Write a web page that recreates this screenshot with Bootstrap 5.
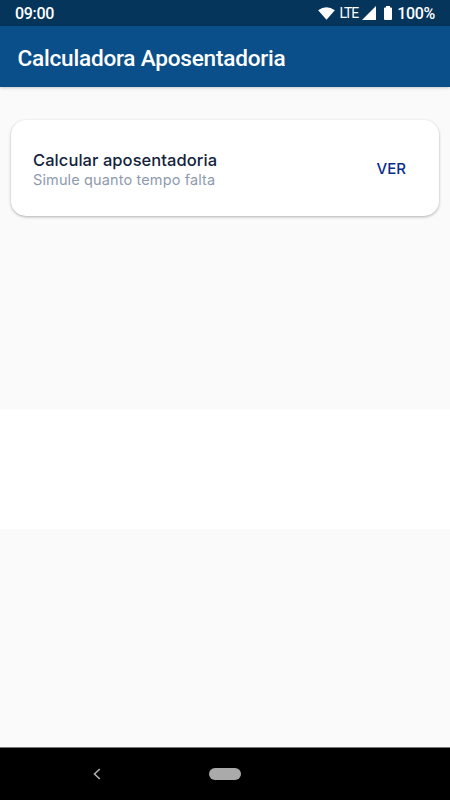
<!DOCTYPE html>
<html lang="pt-BR">
<head>
<meta charset="utf-8">
<meta name="viewport" content="width=device-width, initial-scale=1">
<title>Calculadora Aposentadoria</title>
<link rel="stylesheet" href="https://cdn.jsdelivr.net/npm/bootstrap@5.3.0/dist/css/bootstrap.min.css">
<style>
  body { background: #fafafa; font-family: Roboto, sans-serif; }
  .status-bar { height: 26px; background: #05355b; font-size: 16px; letter-spacing: -.3px; line-height: 26px; font-weight: 500; padding: 2px 15px 0 15px; }
  .status-bar svg { display: block; margin-top: -2px; }
  .lte { font-size: 14px; font-weight: 400; letter-spacing: -1.1px; line-height: 24px; margin: 0 4px 2px 4px; }
  .charge { margin-left: 5px; }
  .app-bar { height: 61px; background: #0a4f8a; box-shadow: 0 1px 3px rgba(0,0,0,.2); padding: 5px 18px 0 17.5px; }
  .app-title { font-size: 22.6px; font-weight: 500; line-height: 1; letter-spacing: -.23px; }
  .option-card { margin: 33px 11px 0; height: 96px; border-radius: 15px; box-shadow: 0 1px 3px rgba(0,0,0,.3); padding: 3px 33px 0 22px; }
  .option-text { font-family: Inter, sans-serif; line-height: 20px; }
  .option-title { font-size: 16.5px; font-weight: 450; letter-spacing: .06px; color: #14233c; }
  .option-sub { font-size: 14.5px; letter-spacing: .13px; color: #8e9bae; }
  .option-action { font-family: Inter, sans-serif; font-size: 15px; font-weight: 500; color: #0b2d86; }
  .blank-band { height: 120px; margin-top: 193px; }
  .nav-keys { height: 53px; background: #000; border-top: 1px solid #777; }
  .home-pill { width: 32px; height: 12px; background: #aaa; }
  .back-key { margin-right: 15px; }
</style>
</head>
<body class="vh-100 d-flex flex-column overflow-hidden">
  <div class="status-bar d-flex align-items-center justify-content-between text-white flex-shrink-0">
    <span class="clock">09:00</span>
    <div class="d-flex align-items-center">
      <svg width="17" height="13" viewBox="0 0 18 14"><path fill="#fff" d="M0 3.400Q9-2.600 18 3.400L9 13.600Z"/></svg>
      <span class="lte">LTE</span>
      <svg width="14" height="14" viewBox="0 0 14 14"><path fill="#fff" d="M14 0v14H0Z"/></svg>
      <svg class="ms-2" width="8" height="14" viewBox="0 0 8 14"><path fill="#fff" d="M2 0h4v1.500H7q1 0 1 1V13q0 1-1 1H1q-1 0-1-1V2.500q0-1 1-1h1Z"/></svg>
      <span class="charge">100%</span>
    </div>
  </div>
  <header class="app-bar d-flex align-items-center text-white flex-shrink-0">
    <h1 class="app-title mb-0 text-nowrap">Calculadora Aposentadoria</h1>
  </header>
  <main class="flex-grow-1">
    <section class="option-card bg-white d-flex align-items-center justify-content-between">
      <div class="option-text text-nowrap">
        <div class="option-title">Calcular aposentadoria</div>
        <div class="option-sub">Simule quanto tempo falta</div>
      </div>
      <a href="#" class="option-action text-decoration-none">VER</a>
    </section>
    <div class="blank-band bg-white"></div>
  </main>
  <footer class="nav-keys d-flex align-items-center flex-shrink-0">
    <div class="col d-flex justify-content-center">
      <svg class="back-key" width="8" height="12" viewBox="0 0 8 12"><path d="M6.800 1 1.500 6l5.300 5" fill="none" stroke="#aaa" stroke-width="1.700"/></svg>
    </div>
    <div class="home-pill rounded-pill"></div>
    <div class="col"></div>
  </footer>
<script src="https://cdn.jsdelivr.net/npm/bootstrap@5.3.0/dist/js/bootstrap.bundle.min.js"></script>
</body>
</html>
